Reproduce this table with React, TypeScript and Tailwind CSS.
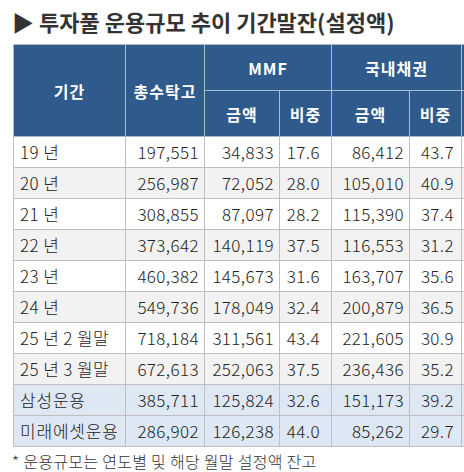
const rows = [
	['19 년', '197,551', '34,833', '17.6', '86,412', '43.7'],
	['20 년', '256,987', '72,052', '28.0', '105,010', '40.9'],
	['21 년', '308,855', '87,097', '28.2', '115,390', '37.4'],
	['22 년', '373,642', '140,119', '37.5', '116,553', '31.2'],
	['23 년', '460,382', '145,673', '31.6', '163,707', '35.6'],
	['24 년', '549,736', '178,049', '32.4', '200,879', '36.5'],
	['25 년 2 월말', '718,184', '311,561', '43.4', '221,605', '30.9'],
	['25 년 3 월말', '672,613', '252,063', '37.5', '236,436', '35.2'],
];

const managers = [
	['삼성운용', '385,711', '125,824', '32.6', '151,173', '39.2'],
	['미래에셋운용', '286,902', '126,238', '44.0', '85,262', '29.7'],
];

const th = 'border border-[#a9bbd2] bg-[#2f5a8c] text-white font-bold text-[16px] tracking-[1px] p-0';
const td = 'border border-[#bfbfbf] h-[31px] p-0 text-[17px] font-light tracking-[0.4px] text-[#222]';

export default function App() {
	return (
		<div className="w-[464px] h-[472px] bg-white overflow-hidden font-['Noto_Sans_CJK_KR','Noto_Sans',sans-serif]">
			<h1 className="pl-[12px] pt-[5px] h-[44px] text-[22px] font-bold text-[#333] leading-[32px]">
				▶ 투자풀 운용규모 추이 기간말잔(설정액)
			</h1>
			<div className="pl-[13px] w-[464px] overflow-hidden">
				<table className="border-collapse table-fixed w-[508px]">
					<colgroup>
						<col className="w-[112px]" />
						<col className="w-[79px]" />
						<col className="w-[75px]" />
						<col className="w-[52px]" />
						<col className="w-[78px]" />
						<col className="w-[52px]" />
						<col className="w-[60px]" />
					</colgroup>
					<thead>
						<tr className="h-[46px]">
							<th rowSpan={2} className={th}>기간</th>
							<th rowSpan={2} className={th}>총수탁고</th>
							<th colSpan={2} className={th}>MMF</th>
							<th colSpan={2} className={th}>국내채권</th>
							<th className={th}></th>
						</tr>
						<tr className="h-[46px]">
							<th className={th}>금액</th>
							<th className={th}>비중</th>
							<th className={th}>금액</th>
							<th className={th}>비중</th>
							<th className={th}></th>
						</tr>
					</thead>
					<tbody>
						{rows.map((r, i) => (
							<tr key={r[0]} className={i % 2 ? 'bg-[#f2f2f2]' : 'bg-white'}>
								<td className={`${td} text-left pl-[6px]`}>{r[0]}</td>
								<td className={`${td} text-right pr-[5px]`}>{r[1]}</td>
								<td className={`${td} text-right pr-[5px]`}>{r[2]}</td>
								<td className={`${td} text-right pr-[11px]`}>{r[3]}</td>
								<td className={`${td} text-right pr-[5px]`}>{r[4]}</td>
								<td className={`${td} text-right pr-[7px]`}>{r[5]}</td>
								<td className={td}></td>
							</tr>
						))}
						{managers.map((r) => (
							<tr key={r[0]} className="bg-[#dde8f4]">
								<td className={`${td} text-left pl-[6px] tracking-[0.8px]`}>{r[0]}</td>
								<td className={`${td} text-right pr-[5px]`}>{r[1]}</td>
								<td className={`${td} text-right pr-[5px]`}>{r[2]}</td>
								<td className={`${td} text-right pr-[11px]`}>{r[3]}</td>
								<td className={`${td} text-right pr-[5px]`}>{r[4]}</td>
								<td className={`${td} text-right pr-[7px]`}>{r[5]}</td>
								<td className={td}></td>
							</tr>
						))}
					</tbody>
				</table>
			</div>
			<p className="pl-[12px] pt-[3px] text-[16px] font-light tracking-[0.3px] text-[#333] leading-[22px]">
				* 운용규모는 연도별 및 해당 월말 설정액 잔고
			</p>
		</div>
	);
}
